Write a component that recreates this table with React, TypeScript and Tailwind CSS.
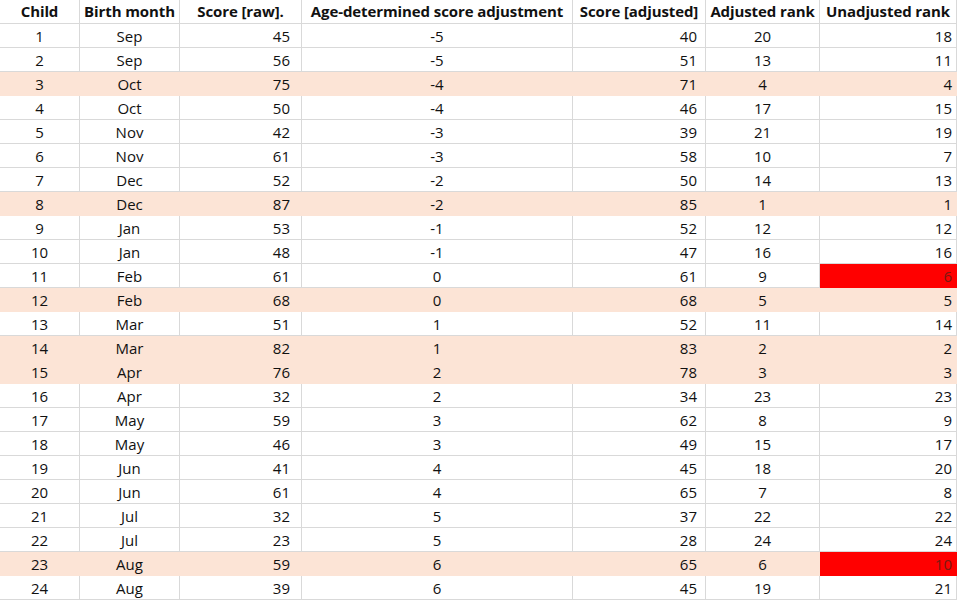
const rows: [number, string, number, number, number, number, number][] = [
  [1, "Sep", 45, -5, 40, 20, 18],
  [2, "Sep", 56, -5, 51, 13, 11],
  [3, "Oct", 75, -4, 71, 4, 4],
  [4, "Oct", 50, -4, 46, 17, 15],
  [5, "Nov", 42, -3, 39, 21, 19],
  [6, "Nov", 61, -3, 58, 10, 7],
  [7, "Dec", 52, -2, 50, 14, 13],
  [8, "Dec", 87, -2, 85, 1, 1],
  [9, "Jan", 53, -1, 52, 12, 12],
  [10, "Jan", 48, -1, 47, 16, 16],
  [11, "Feb", 61, 0, 61, 9, 6],
  [12, "Feb", 68, 0, 68, 5, 5],
  [13, "Mar", 51, 1, 52, 11, 14],
  [14, "Mar", 82, 1, 83, 2, 2],
  [15, "Apr", 76, 2, 78, 3, 3],
  [16, "Apr", 32, 2, 34, 23, 23],
  [17, "May", 59, 3, 62, 8, 9],
  [18, "May", 46, 3, 49, 15, 17],
  [19, "Jun", 41, 4, 45, 18, 20],
  [20, "Jun", 61, 4, 65, 7, 8],
  [21, "Jul", 32, 5, 37, 22, 22],
  [22, "Jul", 23, 5, 28, 24, 24],
  [23, "Aug", 59, 6, 65, 6, 10],
  [24, "Aug", 39, 6, 45, 19, 21],
];

const highlighted = [3, 8, 12, 14, 15, 23];
const flagged = [11, 23];

const headers = [
  "Child",
  "Birth month",
  "Score [raw].",
  "Age-determined score adjustment",
  "Score [adjusted]",
  "Adjusted rank",
  "Unadjusted rank",
];

// column widths + alignment, like the sheet
const cols = [
  { w: "w-[80px]", align: "justify-center" },
  { w: "w-[100px]", align: "justify-center" },
  { w: "w-[122px]", align: "justify-end pr-[11px]" },
  { w: "w-[271px]", align: "justify-center" },
  { w: "w-[133px]", align: "justify-end pr-[8px]" },
  { w: "w-[114px]", align: "justify-center" },
  { w: "w-[137px]", align: "justify-end pr-[4px]" },
];

export default function App() {
  return (
    <div
      className="w-[957px] h-[600px] bg-white text-[15px] text-[#111] overflow-hidden"
      style={{ fontFamily: "'Open Sans', 'Liberation Sans', sans-serif" }}
    >
      <div className="flex h-[24px]">
        {headers.map((h, i) => (
          <div
            key={h}
            className={`${cols[i].w} shrink-0 flex items-center justify-center font-bold tracking-[-0.1px] border-r border-b border-[#d9d9d9] whitespace-nowrap`}
          >
            {h}
          </div>
        ))}
      </div>
      {rows.map((row) => {
        const hl = highlighted.includes(row[0]);
        return (
          <div key={row[0]} className={`flex h-[24px] ${hl ? "bg-[#fce4d6]" : ""}`}>
            {row.map((v, i) => {
              const red = i === 6 && flagged.includes(row[0]);
              const tone = red
                ? "bg-[#ff0000] border-[#ff0000] text-[#7a1a10]"
                : hl
                  ? "border-[#fce4d6]"
                  : "border-[#d9d9d9]";
              return (
                <div
                  key={i}
                  className={`${cols[i].w} ${cols[i].align} ${tone} shrink-0 flex items-center pt-[1px] border-r border-b`}
                >
                  {v}
                </div>
              );
            })}
          </div>
        );
      })}
    </div>
  );
}
